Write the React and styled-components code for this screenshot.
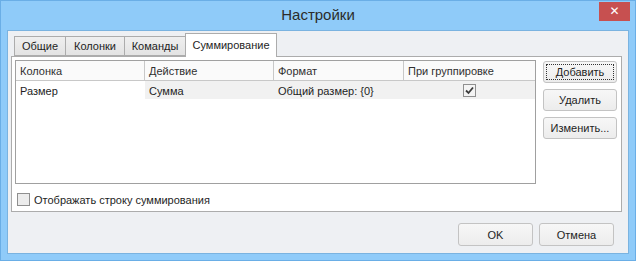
import React from 'react';
import styled, { createGlobalStyle } from 'styled-components';

const GlobalStyle = createGlobalStyle`
  html, body {
    margin: 0;
    padding: 0;
    background: #8fcbf9;
  }
  body {
    font-family: 'Liberation Sans', Arial, sans-serif;
    font-size: 11px;
    color: #1e1e1e;
  }
`;

const columns = [
  { title: 'Колонка', width: 129 },
  { title: 'Действие', width: 129 },
  { title: 'Формат', width: 130 },
  { title: 'При группировке', width: 131 },
];

const tabs = [
  { title: 'Общие', width: 52 },
  { title: 'Колонки', width: 60 },
  { title: 'Команды', width: 62 },
  { title: 'Суммирование', width: 92 },
];

function CheckMark() {
  return (
    <svg width="9" height="9" viewBox="0 0 9 9">
      <path d="M1 4.5 L3.5 7 L8 1.5" fill="none" stroke="#3c3c3c" strokeWidth="1.8" />
    </svg>
  );
}

function App() {
  return (
    <>
      <GlobalStyle />
      <Window>
        <TitleBar>
          <Title>Настройки</Title>
          <CloseButton type="button">✕</CloseButton>
        </TitleBar>
        <Client>
          <TabStrip>
            {tabs.map((t, i) => (
              <Tab key={t.title} $active={i === 3} $width={t.width}>
                {t.title}
              </Tab>
            ))}
          </TabStrip>
          <Page>
            <PageBody>
              <Grid>
                <HeaderRow>
                  {columns.map((c) => (
                    <HeaderCell key={c.title} $width={c.width}>
                      {c.title}
                    </HeaderCell>
                  ))}
                </HeaderRow>
                <DataRow>
                  <Cell $width={columns[0].width} $focused>
                    Размер
                  </Cell>
                  <Cell $width={columns[1].width}>Сумма</Cell>
                  <Cell $width={columns[2].width}>Общий размер: {'{0}'}</Cell>
                  <Cell $width={columns[3].width} $center>
                    <CheckBox $checked>
                      <CheckMark />
                    </CheckBox>
                  </Cell>
                </DataRow>
              </Grid>
              <SideButtons>
                <Button type="button" $focused>
                  <span>Добавить</span>
                </Button>
                <Button type="button">
                  <span>Удалить</span>
                </Button>
                <Button type="button">
                  <span>Изменить...</span>
                </Button>
              </SideButtons>
            </PageBody>
            <Option>
              <CheckBox />
              Отображать строку суммирования
            </Option>
          </Page>
          <Footer>
            <Button type="button" $wide>
              <span>OK</span>
            </Button>
            <Button type="button" $wide>
              <span>Отмена</span>
            </Button>
          </Footer>
        </Client>
      </Window>
    </>
  );
}

export default App;

const Window = styled.div`
  width: 636px;
  height: 261px;
  box-sizing: border-box;
  background: #8fcbf9;
  border: 1px solid #6aaee6;
  display: flex;
  flex-direction: column;
`;

const TitleBar = styled.div`
  position: relative;
  height: 29px;
  box-sizing: border-box;
  padding-bottom: 3px;
  display: flex;
  align-items: center;
  justify-content: center;
`;

const Title = styled.div`
  font-size: 15px;
  color: #2b2b2b;
`;

const CloseButton = styled.button`
  position: absolute;
  top: 1px;
  right: 5px;
  width: 31px;
  height: 19px;
  border: none;
  padding: 0;
  background: #c75050;
  color: #fff;
  font-size: 12px;
  font-weight: bold;
  font-family: 'DejaVu Sans', sans-serif;
  line-height: 19px;
`;

const Client = styled.div`
  flex: 1;
  margin: 0 6px 6px 6px;
  border: 1px solid #7ab3e0;
  background: #eef0f3;
  display: flex;
  flex-direction: column;
  padding: 1px 6px 0 3px;
`;

const TabStrip = styled.div`
  display: flex;
  align-items: flex-end;
  height: 24px;
  padding-left: 3px;
  position: relative;
  z-index: 1;
`;

const Tab = styled.div`
  box-sizing: border-box;
  width: ${({ $width }) => $width}px;
  height: ${({ $active }) => ($active ? '24px' : '20px')};
  padding-top: ${({ $active }) => ($active ? '5px' : '3px')};
  text-align: center;
  margin-right: ${({ $active }) => ($active ? '0' : '-1px')};
  margin-bottom: ${({ $active }) => ($active ? '-1px' : '0')};
  border: 1px solid #acacac;
  border-bottom: ${({ $active }) => ($active ? 'none' : '1px solid #acacac')};
  background: ${({ $active }) => ($active ? '#ffffff' : 'linear-gradient(#efefef, #e3e3e3)')};
  color: #1e1e1e;
  white-space: nowrap;
`;

const Page = styled.div`
  height: 156px;
  box-sizing: border-box;
  background: #ffffff;
  border: 1px solid #acacac;
  padding: 3px 4px 0 3px;
  display: flex;
  flex-direction: column;
`;

const PageBody = styled.div`
  display: flex;
  gap: 7px;
`;

const Grid = styled.div`
  width: 521px;
  height: 124px;
  box-sizing: border-box;
  border: 1px solid #a0a0a0;
  background: #ffffff;
`;

const HeaderRow = styled.div`
  display: flex;
  height: 19px;
  border-bottom: 1px solid #c8c8c8;
  background: #fafafa;
`;

const HeaderCell = styled.div`
  box-sizing: border-box;
  width: ${({ $width }) => $width}px;
  padding: 4px 4px 0;
  border-right: 1px solid #c8c8c8;
  color: #303030;
  &:last-child {
    border-right: none;
  }
`;

const DataRow = styled.div`
  display: flex;
  height: 18px;
`;

const Cell = styled.div`
  box-sizing: border-box;
  width: ${({ $width }) => $width}px;
  padding: 1px 4px 0;
  background: ${({ $focused }) => ($focused ? '#ffffff' : '#f1f1f1')};
  display: flex;
  align-items: center;
  justify-content: ${({ $center }) => ($center ? 'center' : 'flex-start')};
`;

const CheckBox = styled.span`
  box-sizing: border-box;
  width: 13px;
  height: 13px;
  border: 1px solid #8f8f8f;
  background: ${({ $checked }) => ($checked ? '#f4f4f4' : '#ececec')};
  display: inline-flex;
  align-items: center;
  justify-content: center;
`;

const SideButtons = styled.div`
  display: flex;
  flex-direction: column;
  gap: 6px;
  padding-top: 1px;
`;

const Button = styled.button`
  box-sizing: border-box;
  width: ${({ $wide }) => ($wide ? '75px' : '74px')};
  height: ${({ $wide }) => ($wide ? '23px' : '22px')};
  padding: 2px;
  border: 1px solid #c3c3c3;
  border-radius: 3px;
  background: linear-gradient(#f7f7f7, #ececec);
  font-family: inherit;
  font-size: 11px;
  color: #1e1e1e;
  span {
    display: flex;
    align-items: center;
    justify-content: center;
    height: 100%;
    box-sizing: border-box;
    border: 1px dotted ${({ $focused }) => ($focused ? '#333' : 'transparent')};
  }
`;

const Option = styled.label`
  display: flex;
  align-items: center;
  gap: 4px;
  margin-top: 9px;
  padding-left: 2px;
  color: #1e1e1e;
`;

const Footer = styled.div`
  display: flex;
  justify-content: flex-end;
  gap: 6px;
  padding: 11px 8px 0 0;
`;
